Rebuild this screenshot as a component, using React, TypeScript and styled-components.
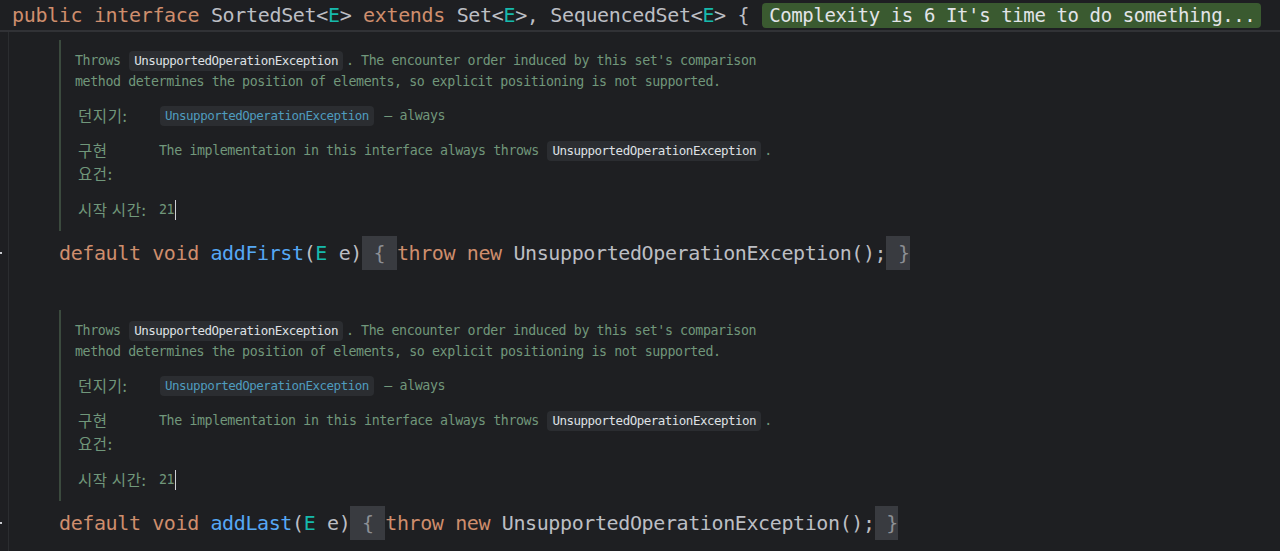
import React from "react";
import styled, { createGlobalStyle } from "styled-components";

const Global = createGlobalStyle`
  html, body { margin: 0; padding: 0; background: #1e1f22; }
  #root { width: 1280px; height: 551px; overflow: hidden; }
`;

const C = {
  bg: "#1e1f22",
  kw: "#cf8e6d",
  plain: "#bcbec4",
  method: "#56a8f5",
  typeParam: "#16baac",
  doc: "#71977b",
  docBorder: "#3b4a3e",
  pill: "#2b2d31",
  fold: "#393b40",
  link: "#4f9cbf",
};

const Page = styled.div`
  width: 1280px;
  height: 551px;
  background: ${C.bg};
  display: flex;
  flex-direction: column;
  overflow: hidden;
`;

const Header = styled.div`
  height: 30px;
  flex: 0 0 30px;
  display: flex;
  align-items: center;
  padding-left: 12px;
  border-bottom: 2px solid #313236;
  font-family: "DejaVu Sans Mono", monospace;
  font-size: 20px;
  letter-spacing: -0.34px;
  color: ${C.plain};
  white-space: pre;
`;

const Complexity = styled.span`
  margin-left: 13px;
  height: 25px;
  display: inline-flex;
  align-items: center;
  padding: 0 6px 0 7px;
  background: #3a5a30;
  border-radius: 4px;
  color: #e2e4e8;
  font-size: 19px;
  letter-spacing: -0.39px;
`;

const Body = styled.div`
  flex: 1;
  display: flex;
`;

const Gutter = styled.div`
  width: 8px;
  flex: 0 0 8px;
  border-right: 1px solid #2b2d30;
`;

const Content = styled.div`
  flex: 1;
  display: flex;
  flex-direction: column;
  padding-top: 8px;
`;

const Section = styled.div`
  display: flex;
  flex-direction: column;
  margin-bottom: 40px;
`;

const DocBlock = styled.div`
  margin-left: 50px;
  border-left: 2px solid ${C.docBorder};
  padding: 10px 0 10.5px 14px;
  font-family: "DejaVu Sans Mono", "Noto Sans CJK KR", monospace;
  font-size: 13.3px;
  letter-spacing: -0.41px;
  color: ${C.doc};
`;

const Para = styled.div`
  line-height: 21px;
  white-space: pre;
`;

const Pill = styled.span<{ $link?: boolean }>`
  display: inline-block;
  line-height: 20px;
  padding: 0 5px;
  margin: 0 3px 0 1px;
  background: ${C.pill};
  border-radius: 4px;
  color: ${(p) => (p.$link ? C.link : "#dfe1e5")};
  font-size: 12.5px;
  letter-spacing: -0.5px;
`;

const Defs = styled.div`
  margin-top: 11.5px;
  display: grid;
  grid-template-columns: 84px 1fr;
  row-gap: 12.5px;
  line-height: 23px;
`;

const Label = styled.div`
  padding-left: 3px;
  font-family: "Noto Sans CJK KR", "DejaVu Sans Mono", sans-serif;
  font-size: 15.5px;
  letter-spacing: 0.6px;
  white-space: nowrap;
`;

const Value = styled.div`
  white-space: pre;
`;

const Caret = styled.span`
  display: inline-block;
  width: 1px;
  height: 20px;
  margin-left: 1px;
  background: #ced0d6;
  vertical-align: middle;
`;

const CodeLine = styled.div`
  position: relative;
  margin-top: 5px;
  height: 34px;
  line-height: 34px;
  padding-left: 50px;
  font-family: "DejaVu Sans Mono", monospace;
  font-size: 20px;
  letter-spacing: -0.39px;
  color: ${C.plain};
  white-space: pre;
  &::before {
    content: "";
    position: absolute;
    left: -9px;
    top: 16px;
    width: 2px;
    height: 2px;
    background: #c8cacf;
  }
`;

const Tok = styled.span<{ $c: string }>`
  color: ${(p) => p.$c};
`;

const Fold = styled.span`
  display: inline-block;
  height: 34px;
  line-height: 34px;
  vertical-align: top;
  background: ${C.fold};
  color: #8c8f94;
`;

function Doc() {
  return (
    <DocBlock>
      <Para>
        {"Throws "}
        <Pill>UnsupportedOperationException</Pill>. The encounter order induced by this set's comparison
      </Para>
      <Para>method determines the position of elements, so explicit positioning is not supported.</Para>
      <Defs>
        <Label>던지기:</Label>
        <Value>
          <Pill $link>UnsupportedOperationException</Pill> — always
        </Value>
        <Label>
          구현
          <br />
          요건:
        </Label>
        <Value>
          {"The implementation in this interface always throws "}
          <Pill>UnsupportedOperationException</Pill>.
        </Value>
        <Label>시작 시간:</Label>
        <Value>
          21<Caret />
        </Value>
      </Defs>
    </DocBlock>
  );
}

function Method({ name }: { name: string }) {
  return (
    <CodeLine>
      <Tok $c={C.kw}>{"default void "}</Tok>
      <Tok $c={C.method}>{name}</Tok>
      {"("}
      <Tok $c={C.typeParam}>E</Tok>
      {" e)"}
      <Fold>{" { "}</Fold>
      <Tok $c={C.kw}>{"throw new "}</Tok>
      {"UnsupportedOperationException();"}
      <Fold>{" }"}</Fold>
    </CodeLine>
  );
}

export default function App() {
  return (
    <Page>
      <Global />
      <Header>
        <Tok $c={C.kw}>{"public interface "}</Tok>
        {"SortedSet<"}
        <Tok $c={C.typeParam}>E</Tok>
        {"> "}
        <Tok $c={C.kw}>{"extends "}</Tok>
        {"Set<"}
        <Tok $c={C.typeParam}>E</Tok>
        {">, SequencedSet<"}
        <Tok $c={C.typeParam}>E</Tok>
        {"> {"}
        <Complexity>Complexity is 6 It's time to do something...</Complexity>
      </Header>
      <Body>
        <Gutter />
        <Content>
          <Section>
            <Doc />
            <Method name="addFirst" />
          </Section>
          <Section>
            <Doc />
            <Method name="addLast" />
          </Section>
        </Content>
      </Body>
    </Page>
  );
}
